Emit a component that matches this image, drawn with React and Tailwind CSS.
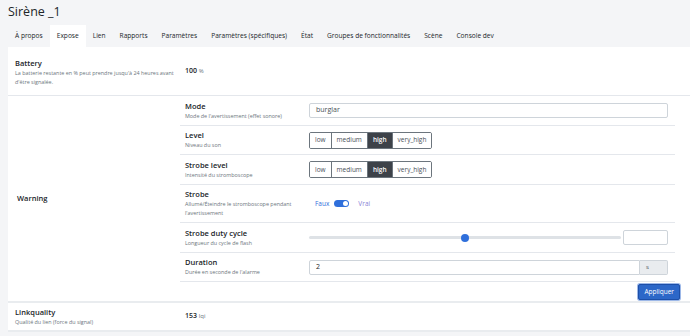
import React from 'react';

const tabs = ['À propos', 'Expose', 'Lien', 'Rapports', 'Paramètres', 'Paramètres (spécifiques)', 'État', 'Groupes de fonctionnalités', 'Scène', 'Console dev'];

function Label({ title, desc }) {
  return (
    <div>
      <div className="text-[7.5px] font-semibold text-[#212529] leading-[11px]">{title}</div>
      <div className="text-[5.4px] text-[#6c757d] leading-[9px]">{desc}</div>
    </div>
  );
}

function Levels() {
  const items = ['low', 'medium', 'high', 'very_high'];
  return (
    <div className="flex h-[17px] border border-[#6c757d] rounded-[2px] overflow-hidden w-fit">
      {items.map((it, i) => (
        <div
          key={it}
          className={
            'flex items-center px-[5px] text-[6.5px] ' +
            (i > 0 ? 'border-l border-[#6c757d] ' : '') +
            (it === 'high' ? 'bg-[#3d4249] text-white font-semibold' : 'bg-white text-[#495057]')
          }
        >
          {it}
        </div>
      ))}
    </div>
  );
}

function SubRow({ title, desc, h, children }) {
  return (
    <div className={'flex items-center border-b border-[#e4e7ec] ' + h}>
      <div className="w-[124px] pl-[5px] pr-[4px] shrink-0">
        <Label title={title} desc={desc} />
      </div>
      <div className="flex-1 pl-[5px] pr-[7px]">{children}</div>
    </div>
  );
}

export default function App() {
  return (
    <div className="w-[690px] h-[336px] overflow-hidden bg-[#f4f5f7] font-['Open_Sans',sans-serif]">
      <div className="h-[25px] pl-[8px] flex items-center text-[12.5px] text-[#212529]">Sirène _1</div>
      <div className="h-[22px] flex pl-[8px]">
        {tabs.map((t) => (
          <div
            key={t}
            className={
              'flex items-center px-[7px] text-[6.6px] text-[#212529] ' + (t === 'Expose' ? 'bg-white' : '')
            }
          >
            {t}
          </div>
        ))}
      </div>
      <div className="ml-[8px] bg-white">
        {/* battery */}
        <div className="flex items-center h-[49px] border-b border-[#e4e7ec]">
          <div className="w-[172px] pl-[7px] pt-[2px]">
            <Label title="Battery" desc="La batterie restante en % peut prendre jusqu'à 24 heures avant d'être signalée." />
          </div>
          <div className="pl-[5px] text-[7px] text-[#212529]">
            <span className="font-semibold">100</span> <span className="text-[6px] text-[#6c757d]">%</span>
          </div>
        </div>

        {/* warning */}
        <div className="flex border-b-2 border-[#e9ecef]">
          <div className="w-[172px] pl-[9px] flex items-center text-[7.5px] font-semibold text-[#212529]">Warning</div>
          <div className="flex-1">
            <div className="w-[495px]">
              <SubRow title="Mode" desc="Mode de l'avertissement (effet sonore)" h="h-[30px]">
                <div className="h-[15px] border border-[#ced4da] rounded-[2px] flex items-center px-[6px] text-[7px] text-[#495057]">
                  burglar
                </div>
              </SubRow>
              <SubRow title="Level" desc="Niveau du son" h="h-[29px]">
                <Levels />
              </SubRow>
              <SubRow title="Strobe level" desc="Intensité du stromboscope" h="h-[30px]">
                <Levels />
              </SubRow>
              <SubRow title="Strobe" desc="Allumé/Éteindre le stromboscope pendant l'avertissement" h="h-[38px]">
                <div className="flex items-center gap-[5px] pl-[6px] text-[6.5px] text-[#2f6fdb]">
                  <span>Faux</span>
                  <div className="w-[15px] h-[7px] rounded-full bg-[#2f6fdb] flex items-center justify-end pr-[1px]">
                    <div className="w-[5px] h-[5px] rounded-full bg-white" />
                  </div>
                  <span className="ml-[4px] text-[#8a7fd6]">Vrai</span>
                </div>
              </SubRow>
              <SubRow title="Strobe duty cycle" desc="Longueur du cycle de flash" h="h-[30px]">
                <div className="flex items-center">
                  <div className="relative flex-1 h-[3px] rounded-full bg-[#dee2e6]">
                    <div className="absolute left-[50%] top-[-2.5px] w-[8px] h-[8px] -ml-[4px] rounded-full bg-[#2f6fdb]" />
                  </div>
                  <div className="ml-[2px] w-[45px] h-[15px] border border-[#ced4da] rounded-[2px]" />
                </div>
              </SubRow>
              <SubRow title="Duration" desc="Durée en seconde de l'alarme" h="h-[29px]">
                <div className="flex h-[15px]">
                  <div className="flex-1 border border-[#ced4da] rounded-l-[2px] flex items-center px-[6px] text-[7px] text-[#212529]">2</div>
                  <div className="w-[28px] border border-l-0 border-[#ced4da] rounded-r-[2px] bg-[#e9ecef] flex items-center pl-[6px] text-[6px] text-[#495057]">s</div>
                </div>
              </SubRow>
            </div>
            <div className="h-[19px] flex items-center justify-end pr-[10px]">
              <div className="h-[16px] px-[5px] flex items-center bg-[#2c67c8] border border-[#1d4fa8] rounded-[2px] shadow-[0_0_0_1px_#9db8e8] text-white text-[6.5px]">
                Appliquer
              </div>
            </div>
          </div>
        </div>

        {/* linkquality */}
        <div className="flex items-center h-[29px] border-b-2 border-[#e9ecef]">
          <div className="w-[172px] pl-[7px]">
            <Label title="Linkquality" desc="Qualité du lien (force du signal)" />
          </div>
          <div className="pl-[5px] text-[7px] text-[#212529]">
            <span className="font-semibold">153</span> <span className="text-[6px] text-[#6c757d]">lqi</span>
          </div>
        </div>
      </div>
    </div>
  );
}
